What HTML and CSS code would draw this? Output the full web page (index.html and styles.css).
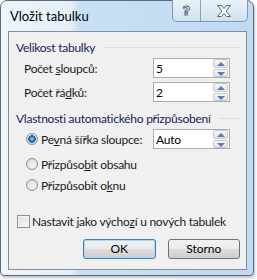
FILE: index.html
```html
<!DOCTYPE html>
<html lang="cs">
<head>
    <meta charset="UTF-8">
    <title>Vložit tabulku</title>
    <link rel="stylesheet" href="styles.css">
</head>
<body>
    <div class="window">
        <div class="titlebar">
            <span class="title">Vložit tabulku</span>
            <div class="caption-btns">
                <div class="cbtn help">?</div>
                <div class="cbtn close">
                    <svg width="16" height="12" viewBox="0 0 16 12">
                        <path d="M1.5 0.5h4l2.5 3 2.5-3h4l-4.5 5.5 4.5 5.5h-4l-2.5-3-2.5 3h-4l4.5-5.5z" fill="#fff" stroke="#5a6675" stroke-width="1"/>
                    </svg>
                </div>
            </div>
        </div>
        <div class="client">
            <div class="group-head">
                <span>Velikost tabulky</span>
                <span class="rule"></span>
            </div>
            <div class="row first">
                <span class="label">Počet <u>s</u>loupců:</span>
                <div class="spin">
                    <span class="value">5</span>
                    <div class="arrows"><span class="up"></span><span class="down"></span></div>
                </div>
            </div>
            <div class="row second">
                <span class="label">Počet řá<u>d</u>ků:</span>
                <div class="spin">
                    <span class="value">2</span>
                    <div class="arrows"><span class="up"></span><span class="down"></span></div>
                </div>
            </div>

            <div class="group-head second-head">
                <span>Vlastnosti automatického přizpůsobení</span>
                <span class="rule"></span>
            </div>
            <div class="row radio-row r1">
                <span class="radio checked"></span>
                <span class="radio-label">Pe<u>v</u>ná šířka sloupce:</span>
                <div class="spin">
                    <span class="value">Auto</span>
                    <div class="arrows"><span class="up"></span><span class="down"></span></div>
                </div>
            </div>
            <div class="row radio-row r2">
                <span class="radio"></span>
                <span class="radio-label">Přizpůso<u>b</u>it obsahu</span>
            </div>
            <div class="row radio-row r3">
                <span class="radio"></span>
                <span class="radio-label">Přizpůsobit o<u>k</u>nu</span>
            </div>

            <div class="row check-row">
                <span class="checkbox"></span>
                <span class="check-label">Nastavit jako výcho<u>z</u>í u nových tabulek</span>
            </div>

            <div class="buttons">
                <button class="btn default">OK</button>
                <button class="btn">Storno</button>
            </div>
        </div>
    </div>
</body>
</html>
```

FILE: styles.css
```css
body {
    margin: 0;
    width: 257px;
    height: 280px;
    background: #ffffff;
    font-family: Lato, sans-serif;
    font-size: 12px;
    letter-spacing: -0.25px;
    overflow: hidden;
    white-space: nowrap;
}
.window {
    border: 1px solid #5e6a78;
    border-radius: 7px 7px 4px 4px;
    background: linear-gradient(90deg, #eef5fb 0px, #e4eff9 70px, #c7e0f5 78px, #bfdaf2 100%);
    box-shadow: 1px 2px 3px rgba(0, 0, 0, 0.25);
    display: flex;
    flex-direction: column;
    padding: 0 6px 5px 7px;
    box-sizing: border-box;
    width: 254px;
    height: 276px;
}
.titlebar {
    height: 30px;
    display: flex;
    align-items: flex-start;
    position: relative;
}
.title {
    margin-top: 7px;
    margin-left: 2px;
    font-size: 13px;
    letter-spacing: 0;
    color: #000;
}
.caption-btns {
    position: absolute;
    top: -1px;
    right: -1px;
    display: flex;
    height: 21px;
    border: 1px solid #8796a8;
    border-top: none;
    border-radius: 0 0 5px 5px;
    background: linear-gradient(#e9f2fa, #cfe2f3);
    overflow: hidden;
}
.cbtn {
    display: flex;
    align-items: center;
    justify-content: center;
}
.help {
    width: 27px;
    border-right: 1px solid #8fa0b2;
    font-family: "DejaVu Sans", sans-serif;
    font-weight: bold;
    font-size: 13px;
    color: #fff;
    -webkit-text-stroke: 1px #5a6675;
}
.close {
    width: 46px;
}
.client {
    flex: 1;
    background: #f0f0f0;
    border: 1px solid #858d97;
    padding: 7px 6px 0 7px;
    display: flex;
    flex-direction: column;
}
.group-head {
    height: 16px;
    display: flex;
    align-items: center;
    color: #151c55;
}
.group-head .rule {
    flex: 1;
    height: 1px;
    background: #d5dfe5;
    margin-left: 8px;
}
.second-head {
    margin-top: 8px;
}
.row {
    display: flex;
    align-items: center;
    height: 20px;
    color: #1a1a1a;
}
.row.first {
    margin-top: 3px;
}
.row.second {
    margin-top: 4px;
}
.label {
    padding-left: 8px;
    flex-shrink: 0;
    box-sizing: border-box;
    width: 137px;
}
.spin {
    width: 77px;
    height: 20px;
    box-sizing: border-box;
    border: 1px solid #abadb3;
    background: #fff;
    display: flex;
    align-items: center;
    justify-content: space-between;
    color: #000;
    flex-shrink: 0;
}
.value {
    padding-left: 2px;
}
.arrows {
    width: 15px;
    height: 18px;
    display: flex;
    flex-direction: column;
    gap: 1px;
    margin-right: 1px;
}
.arrows span {
    flex: 1;
    border: 1px solid #c4c8cd;
    border-radius: 2px;
    background: linear-gradient(#f6f6f6, #e4e4e4);
    position: relative;
}
.arrows span::after {
    content: "";
    position: absolute;
    left: 3px;
    top: 2px;
    border-left: 4px solid transparent;
    border-right: 4px solid transparent;
}
.arrows .up::after {
    border-bottom: 4px solid #5b7bb8;
}
.arrows .down::after {
    border-top: 4px solid #5b7bb8;
}
.radio-row {
    padding-left: 10px;
}
.radio-row.r1 {
    margin-top: 3px;
}
.radio-row.r2 {
    margin-top: 5px;
}
.radio-row.r3 {
    margin-top: 1px;
}
.radio {
    width: 12px;
    height: 12px;
    border: 1px solid #8e8f8f;
    border-radius: 50%;
    background: radial-gradient(circle at 60% 65%, #f4f4f4, #d7d7d7);
    margin-right: 3px;
    box-sizing: border-box;
    flex-shrink: 0;
}
.radio.checked {
    background: radial-gradient(circle, #8ed4f9 0, #1f7fc0 2.5px, #0e4f86 3.5px, #e8e8e8 4px, #d6d6d6 100%);
}
.radio-label {
    width: 112px;
    flex-shrink: 0;
}
.check-row {
    margin-top: 16px;
    padding-left: 1px;
}
.checkbox {
    width: 13px;
    height: 13px;
    border: 1px solid #8e8f8f;
    box-sizing: border-box;
    background: linear-gradient(135deg, #dcdcdc, #fbfbfb);
    box-shadow: inset 0 0 0 1px #f4f4f4;
    margin-right: 2px;
    flex-shrink: 0;
}
.buttons {
    display: flex;
    margin-top: 8px;
    padding-left: 67px;
    gap: 12px;
}
.btn {
    width: 73px;
    height: 20px;
    border: 1px solid #707070;
    border-radius: 3px;
    background: linear-gradient(#f2f2f2 0%, #ebebeb 50%, #dddddd 51%, #cfcfcf 100%);
    font-family: Lato, sans-serif;
    font-size: 12px;
    color: #000;
    padding: 0;
    line-height: 16px;
}
.btn.default {
    border-color: #3c7fb1;
    box-shadow: inset 0 0 0 1px #a8dcf6;
}
```
